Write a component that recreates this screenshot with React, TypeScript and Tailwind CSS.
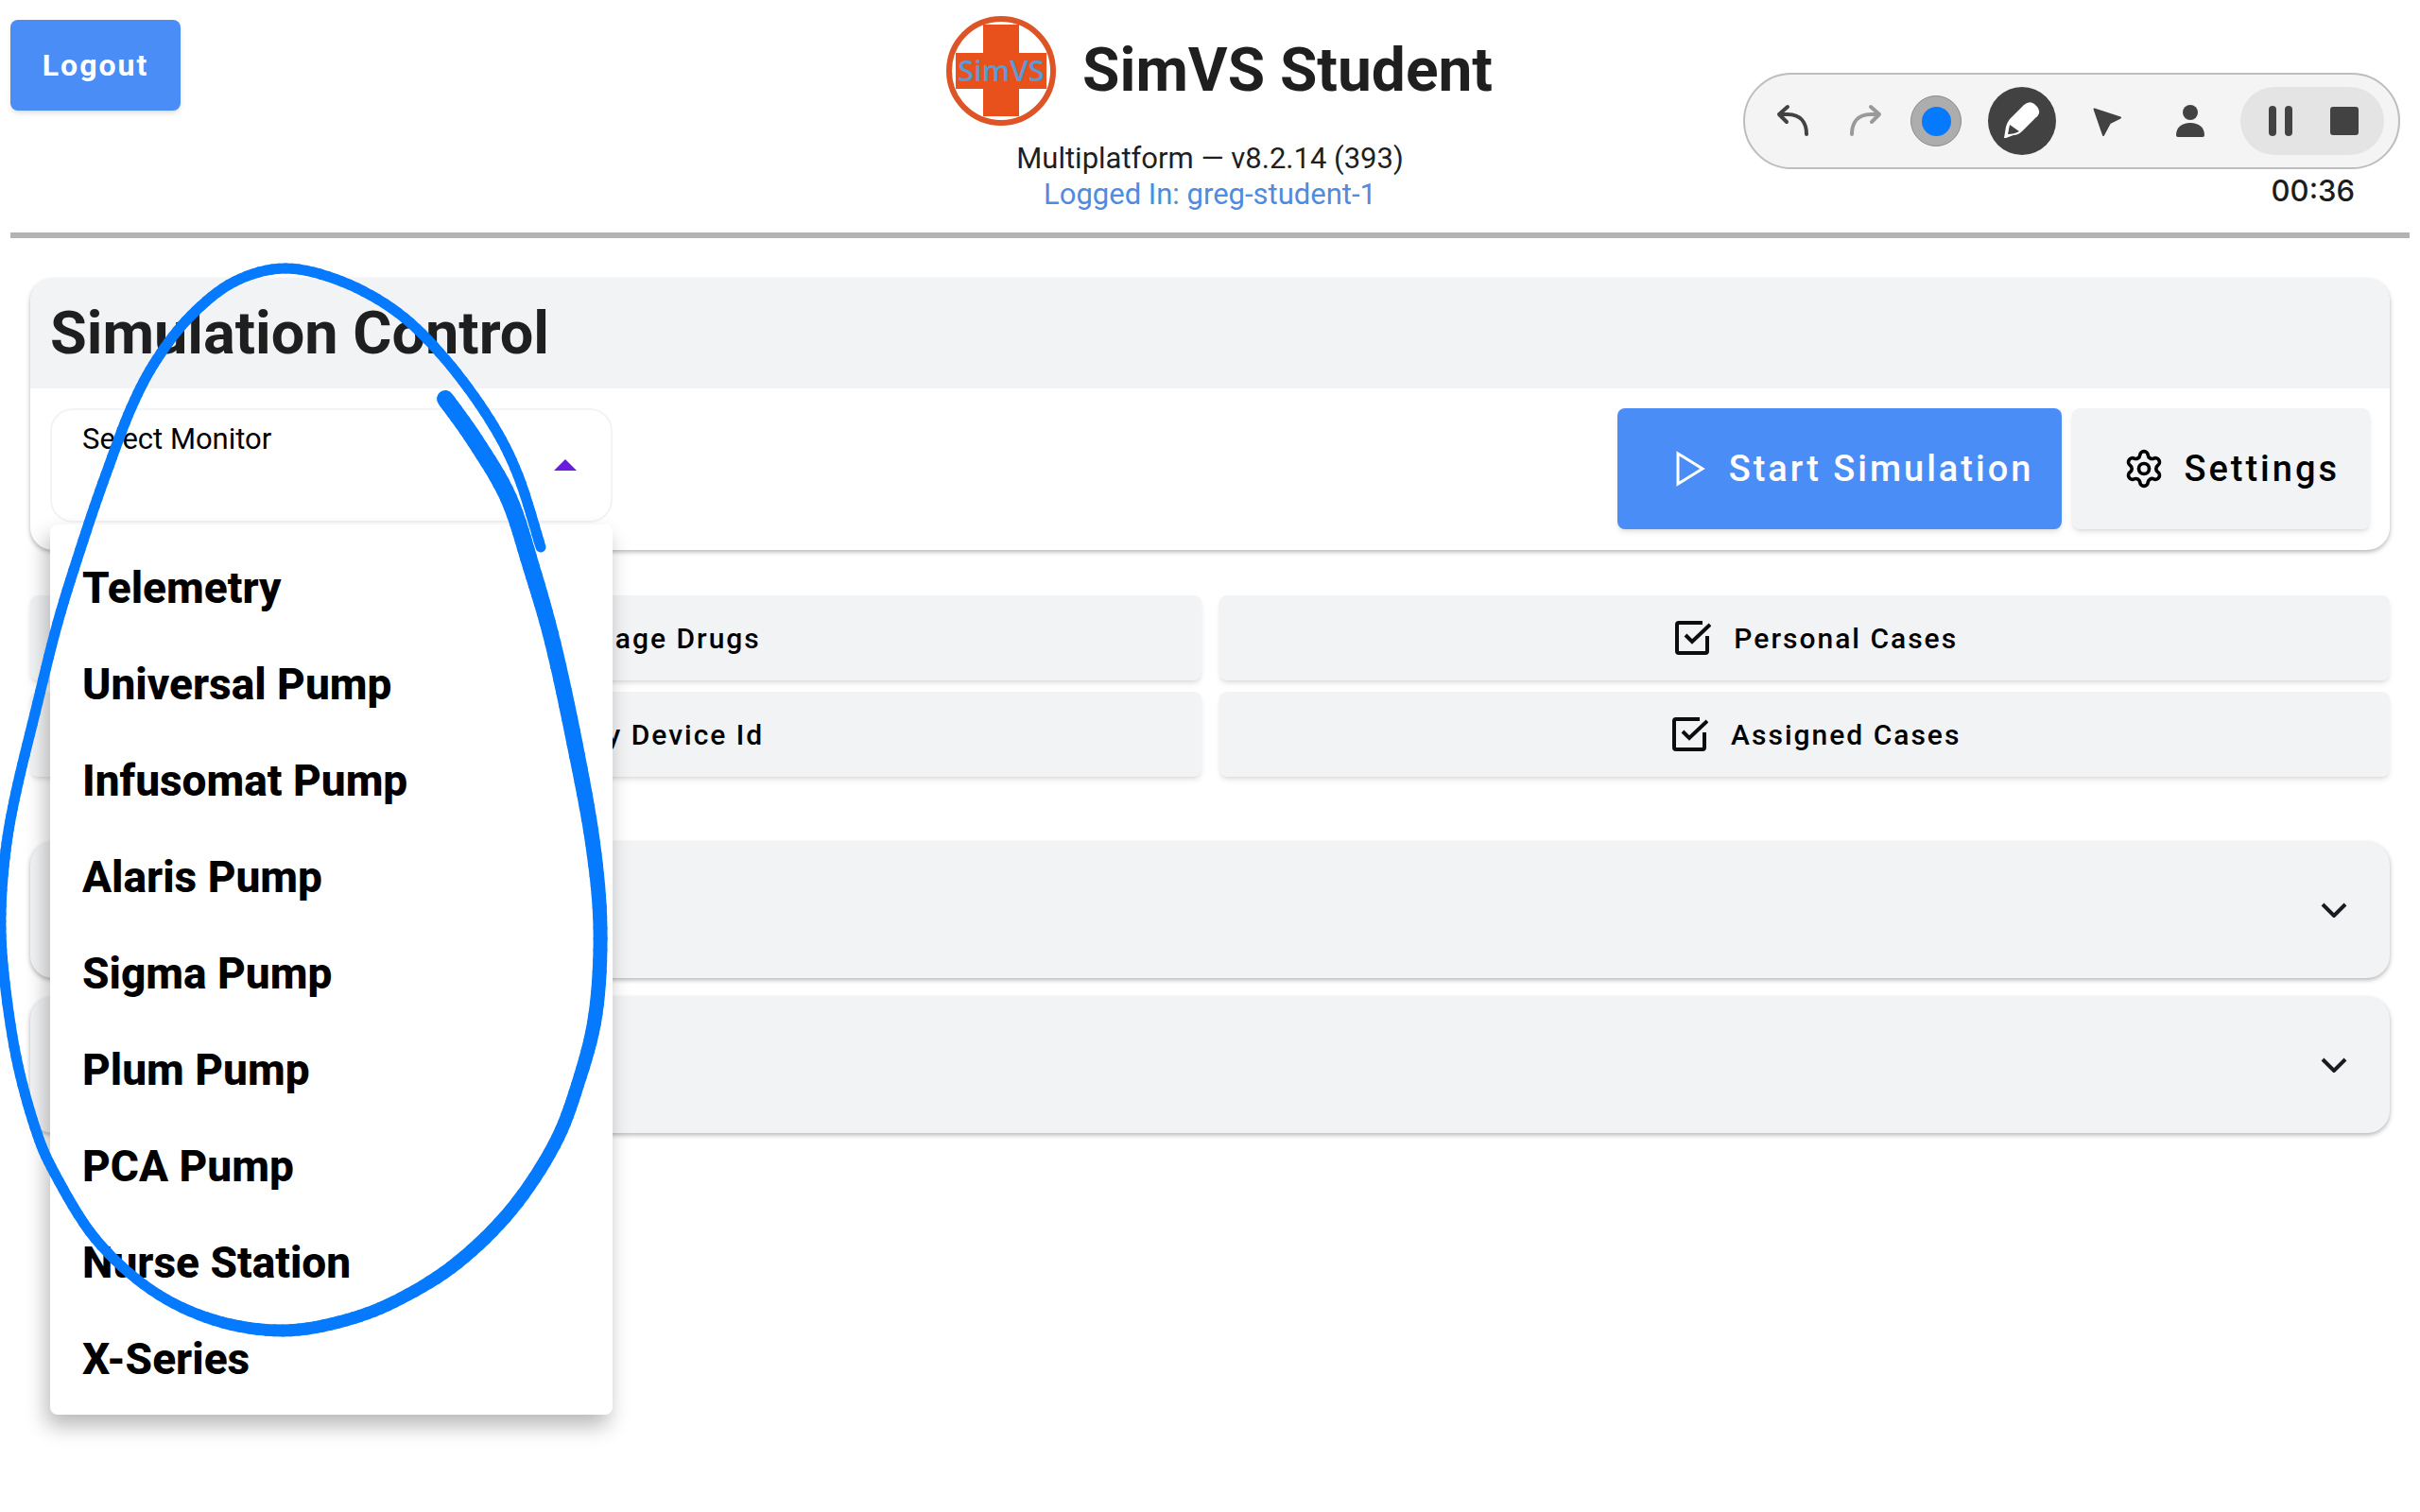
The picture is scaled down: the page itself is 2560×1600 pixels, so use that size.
import { Settings } from 'lucide-react';

const monitors = [
  'Telemetry',
  'Universal Pump',
  'Infusomat Pump',
  'Alaris Pump',
  'Sigma Pump',
  'Plum Pump',
  'PCA Pump',
  'Nurse Station',
  'X-Series',
];

const actions = ['Manage Drugs', 'Personal Cases', 'Copy Device Id', 'Assigned Cases'];

const sections = ['First section', 'Second section'];

// pen samples: x, y, stroke width
const penPoints = [
  [471, 422, 18], [503, 467, 18], [538, 527, 18], [562, 600, 18], [585, 681, 17],
  [608, 787, 17], [627, 892, 16], [635, 982, 15], [630, 1073, 15], [611, 1148, 14],
  [586, 1212, 14], [541, 1280, 14], [484, 1336, 14], [424, 1374, 13], [366, 1397, 13],
  [299, 1408, 13], [227, 1397, 12], [160, 1365, 11], [101, 1311, 11], [58, 1242, 11],
  [37, 1193, 11], [17, 1118, 11], [4, 1030, 11], [1, 967, 11], [6, 900, 11],
  [17, 838, 11], [37, 755, 11], [61, 659, 11], [88, 572, 11], [112, 502, 11],
  [139, 431, 11], [166, 380, 11], [202, 334, 11], [248, 298, 11], [302, 284, 11],
  [362, 298, 11], [421, 331, 11], [471, 380, 11], [518, 444, 11], [548, 503, 11],
  [572, 579, 11],
];

function spline(a: number, b: number, c: number, d: number, t: number) {
  return 0.5 * (2 * b + (c - a) * t + (2 * a - 5 * b + 4 * c - d) * t * t + (3 * b - a - 3 * c + d) * t * t * t);
}

function smoothPoints(points: number[][], steps: number) {
  const out: number[][] = [];
  for (let i = 0; i < points.length - 1; i++) {
    const p0 = points[Math.max(i - 1, 0)];
    const p3 = points[Math.min(i + 2, points.length - 1)];
    for (let s = 0; s < steps; s++) {
      out.push([0, 1, 2].map((k) => spline(p0[k], points[i][k], points[i + 1][k], p3[k], s / steps)));
    }
  }
  out.push(points[points.length - 1]);
  return out;
}

function PenMark() {
  const points = smoothPoints(penPoints, 8);
  return (
    <svg viewBox="0 0 700 1600" className="pointer-events-none absolute left-0 top-0 z-20 h-[1600px] w-[700px]" stroke="#057aff" strokeLinecap="round">
      {points.slice(1).map(([x, y, width], i) => (
        <line key={i} x1={points[i][0]} y1={points[i][1]} x2={x} y2={y} strokeWidth={width} />
      ))}
    </svg>
  );
}

function Logo() {
  return (
    <svg viewBox="0 0 116 116" className="size-[116px]" role="img" aria-label="SimVS">
      <circle cx="58" cy="58" r="55" fill="#fff" stroke="#dd5427" strokeWidth="6" />
      <rect x="39" y="9" width="38" height="97" fill="#e8501c" />
      <rect x="10" y="39" width="96" height="38" fill="#e8501c" />
      <text x="58" y="69" textAnchor="middle" fontFamily="Open Sans, sans-serif" fontWeight="600" fontSize="31" fill="#5b9bd5">
        SimVS
      </text>
    </svg>
  );
}

function CheckIcon() {
  return (
    <svg viewBox="0 0 40 40" className="size-10" fill="none" stroke="#0d0d0d" strokeWidth="4">
      <path d="M31 4H6Q4 4 4 6V34Q4 36 6 36H34Q36 36 36 34V18" />
      <path d="M13 17L20 24L39 6" />
    </svg>
  );
}

function ArrowIcon({ d }: { d: string }) {
  return (
    <svg viewBox="0 0 48 48" className="size-12" fill="none" stroke="currentColor" strokeWidth="4" strokeLinecap="round" strokeLinejoin="round">
      <path d={d} />
    </svg>
  );
}

function Toolbar() {
  return (
    <div className="absolute right-[21px] top-[77px] text-[#424242]">
      <div className="flex h-[102px] items-center rounded-full border-2 border-[#bdbdbd] bg-[#f4f4f4] pl-[27px] pr-[15px]">
        <button aria-label="Undo">
          <ArrowIcon d="M18 9L9 17L17 25M9 17H18C32 17 38 26 38 38" />
        </button>
        <button aria-label="Redo" className="ml-7 text-[#9a9a9a]">
          <ArrowIcon d="M30 9L39 17L31 25M39 17H30C16 17 10 26 10 38" />
        </button>
        <button aria-label="Pen color" className="ml-6 flex size-[54px] items-center justify-center rounded-full border border-[#8c8c8c] bg-[#adadad]">
          <span className="size-[31px] rounded-full bg-[#057aff]" />
        </button>
        <button aria-label="Pen" className="ml-7 flex size-[72px] items-center justify-center rounded-full bg-[#424242]">
          <svg viewBox="0 0 48 48" className="size-12">
            <path d="M5 42L7 30Q8 26 11 22L26 7Q32 2 37 6Q43 11 42 16Q41 19 38 21L24 35Q20 39 15 39L7 42Z" fill="#fff" />
            <path d="M11 28L21 35Q16 38 9 38Z" fill="#424242" />
          </svg>
        </button>
        <button aria-label="Pointer" className="ml-[30px]">
          <svg viewBox="0 0 48 48" className="size-12" fill="currentColor" stroke="currentColor" strokeWidth="2" strokeLinejoin="round">
            <path d="M10.500 11.500L38 20.500L27 26L20 39Z" />
          </svg>
        </button>
        <button aria-label="Webcam" className="ml-10">
          <svg viewBox="0 0 48 48" className="size-12" fill="currentColor">
            <circle cx="24" cy="15" r="8" />
            <path d="M11 41Q9 41 9 39C9 31 15 26 24 26S39 31 39 39Q39 41 37 41Z" />
          </svg>
        </button>
        <div className="ml-[29px] flex h-[72px] w-[152px] items-center justify-center gap-5 rounded-full bg-[#e4e4e4]">
          <button aria-label="Pause">
            <svg viewBox="0 0 48 48" className="size-12" fill="currentColor">
              <rect x="12" y="8" width="8" height="32" rx="4" />
              <rect x="29" y="8" width="8" height="32" rx="4" />
            </svg>
          </button>
          <button aria-label="Stop">
            <svg viewBox="0 0 48 48" className="size-12" fill="currentColor">
              <rect x="9" y="9" width="30" height="30" rx="3" />
            </svg>
          </button>
        </div>
      </div>
      <p className="pr-12 text-right font-[Inter,sans-serif] text-[31px] leading-[46px] font-medium text-[#1c1c1c]">00:36</p>
    </div>
  );
}

export default function App() {
  return (
    <div className="relative min-h-screen overflow-hidden bg-white font-[Roboto,sans-serif] text-[#1f1f1f]">
      <header className="relative mx-[11px] h-[252px] border-b-6 border-[#b3b3b3]">
        <button className="absolute left-0 top-[21px] h-24 w-[180px] rounded-lg bg-[#4b8df7] text-[32px] font-bold tracking-[2px] text-white shadow-md">
          Logout
        </button>
        <div className="flex flex-col items-center pt-[17px]">
          <div className="flex items-center gap-7 pl-5">
            <Logo />
            <h1 className="text-[64px] font-bold">SimVS Student</h1>
          </div>
          <p className="mt-4 text-[31px] leading-[38px]">Multiplatform — v8.2.14 (393)</p>
          <p className="text-[31px] leading-[38px] text-[#4f8be0]">Logged In: greg-student-1</p>
        </div>
      </header>

      <main className="px-8 pt-[43px]">
        <section className="rounded-3xl bg-white shadow-[0_2px_5px_rgba(0,0,0,0.3)]">
          <h2 className="flex h-[116px] items-center rounded-t-3xl bg-[#f2f3f5] px-[21px] text-[63px] font-bold">
            Simulation Control
          </h2>
          <div className="flex items-start justify-between pt-[21px] pr-[21px] pb-[22px] pl-[21px]">
            <div className="relative">
              <button
                aria-haspopup="listbox"
                aria-expanded="true"
                className="flex h-[121px] w-[595px] items-start justify-between rounded-3xl border-2 border-[#f2f3f5] px-8 pt-3 text-black"
              >
                <span className="text-[31px] leading-[38px]">Select Monitor</span>
                <svg viewBox="0 0 24 12" className="mt-10 mr-1 h-3 w-6" fill="#6a1bdb">
                  <path d="M0 12L12 0L24 12Z" />
                </svg>
              </button>
              <ul
                role="listbox"
                aria-label="Select Monitor"
                className="absolute left-0 top-[123px] z-10 w-[595px] rounded-lg bg-white pt-4 pb-2 text-black shadow-[-4px_12px_22px_rgba(0,0,0,0.28)]"
              >
                {monitors.map((name) => (
                  <li key={name} role="option" aria-selected="false" className="flex h-[102px] items-center px-[34px] text-[46px] font-extrabold">
                    {name}
                  </li>
                ))}
              </ul>
            </div>
            <div className="flex gap-[11px] text-[38px] font-medium tracking-[3px]">
              <button className="flex h-32 items-center gap-6 rounded-lg bg-[#4b8df7] pl-[58px] pr-[30px] text-white shadow-md">
                <svg viewBox="0 0 36 40" className="h-10 w-9" fill="none" stroke="#fff" strokeWidth="3">
                  <path d="M6 4L32 20L6 36Z" />
                </svg>
                Start Simulation
              </button>
              <button className="flex h-32 items-center gap-5 rounded-lg bg-[#f2f3f5] pl-[54px] pr-8 text-black shadow-md">
                <Settings className="size-11" strokeWidth={2} />
                Settings
              </button>
            </div>
          </div>
        </section>

        <div className="mt-12 grid grid-cols-2 gap-x-[19px] gap-y-3">
          {actions.map((label) => (
            <button key={label} className="flex h-[90px] items-center justify-center gap-6 rounded-lg bg-[#f2f3f5] pl-6 text-[30px] font-medium tracking-[2px] text-black shadow-md">
              <CheckIcon />
              {label}
            </button>
          ))}
        </div>

        <div className="mt-[69px] flex flex-col gap-5">
          {sections.map((name) => (
            <button key={name} aria-label={name} aria-expanded="false" className="flex h-36 items-center justify-end rounded-3xl bg-[#f2f3f5] pr-[45px] shadow-[0_2px_5px_rgba(0,0,0,0.3)]">
              <svg viewBox="0 0 28 16" className="h-4 w-7" fill="none" stroke="#1c1b1f" strokeWidth="4">
                <path d="M2 2L14 14L26 2" />
              </svg>
            </button>
          ))}
        </div>
      </main>

      <Toolbar />
      <PenMark />
    </div>
  );
}
